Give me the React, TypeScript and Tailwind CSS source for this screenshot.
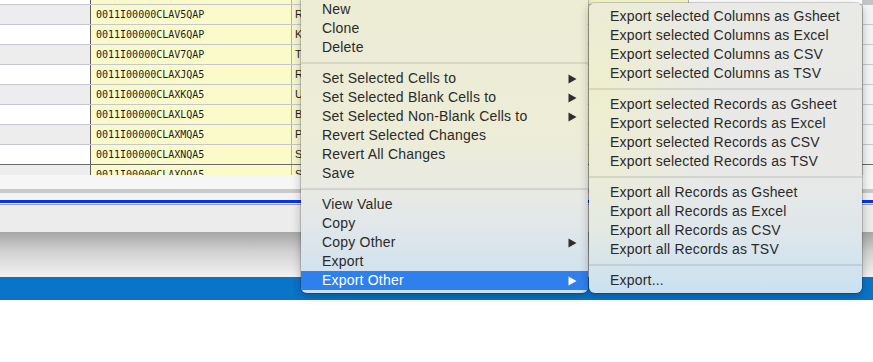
import type { ReactNode } from 'react';

type MenuEntry =
  | { kind: 'item'; label: string; submenu?: boolean; active?: boolean }
  | { kind: 'separator' };

const ROWS: { id: string; name: string }[] = [
  { id: '0011I00000CLAV5QAP', name: 'R' },
  { id: '0011I00000CLAV6QAP', name: 'K' },
  { id: '0011I00000CLAV7QAP', name: 'T' },
  { id: '0011I00000CLAXJQA5', name: 'R' },
  { id: '0011I00000CLAXKQA5', name: 'U' },
  { id: '0011I00000CLAXLQA5', name: 'B' },
  { id: '0011I00000CLAXMQA5', name: 'P' },
  { id: '0011I00000CLAXNQA5', name: 'S' },
  { id: '0011I00000CLAXOQA5', name: 'S' },
];

const MAIN_MENU: MenuEntry[] = [
  { kind: 'item', label: 'New' },
  { kind: 'item', label: 'Clone' },
  { kind: 'item', label: 'Delete' },
  { kind: 'separator' },
  { kind: 'item', label: 'Set Selected Cells to', submenu: true },
  { kind: 'item', label: 'Set Selected Blank Cells to', submenu: true },
  { kind: 'item', label: 'Set Selected Non-Blank Cells to', submenu: true },
  { kind: 'item', label: 'Revert Selected Changes' },
  { kind: 'item', label: 'Revert All Changes' },
  { kind: 'item', label: 'Save' },
  { kind: 'separator' },
  { kind: 'item', label: 'View Value' },
  { kind: 'item', label: 'Copy' },
  { kind: 'item', label: 'Copy Other', submenu: true },
  { kind: 'item', label: 'Export' },
  { kind: 'item', label: 'Export Other', submenu: true, active: true },
];

const EXPORT_MENU: MenuEntry[] = [
  { kind: 'item', label: 'Export selected Columns as Gsheet' },
  { kind: 'item', label: 'Export selected Columns as Excel' },
  { kind: 'item', label: 'Export selected Columns as CSV' },
  { kind: 'item', label: 'Export selected Columns as TSV' },
  { kind: 'separator' },
  { kind: 'item', label: 'Export selected Records as Gsheet' },
  { kind: 'item', label: 'Export selected Records as Excel' },
  { kind: 'item', label: 'Export selected Records as CSV' },
  { kind: 'item', label: 'Export selected Records as TSV' },
  { kind: 'separator' },
  { kind: 'item', label: 'Export all Records as Gsheet' },
  { kind: 'item', label: 'Export all Records as Excel' },
  { kind: 'item', label: 'Export all Records as CSV' },
  { kind: 'item', label: 'Export all Records as TSV' },
  { kind: 'separator' },
  { kind: 'item', label: 'Export...' },
];

function SubmenuArrow({ active }: { active?: boolean }) {
  return (
    <svg width="9" height="10" viewBox="0 0 9 10" className="shrink-0">
      <polygon points="0.5,0.5 8.5,5 0.5,9.5" fill={active ? '#ffffff' : '#2e2e2e'} />
    </svg>
  );
}

function MenuRows({ entries }: { entries: MenuEntry[] }) {
  return (
    <>
      {entries.map((entry, index) => {
        if (entry.kind === 'separator') {
          return (
            <div key={`sep-${index}`} className="flex h-[12px] items-center">
              <div className="h-[2px] w-full bg-black/[0.09]" />
            </div>
          );
        }
        return (
          <div
            key={entry.label}
            className={`flex h-[19px] items-center justify-between pl-[21px] pr-[11px] ${
              entry.active ? 'bg-[#2f7fed] text-white' : 'text-[#2a2a2a]'
            }`}
          >
            <span className="whitespace-nowrap">{entry.label}</span>
            {entry.submenu && <SubmenuArrow active={entry.active} />}
          </div>
        );
      })}
    </>
  );
}

function MenuPanel({ className, children }: { className: string; children: ReactNode }) {
  return (
    <div
      className={`absolute overflow-hidden rounded-[6px] text-[14px] leading-[19px] tracking-[0.2px] shadow-[0_3px_10px_rgba(0,0,0,0.28)] ring-1 ring-black/15 ${className}`}
    >
      {children}
    </div>
  );
}

function TableRow({ index, row }: { index: number; row: { id: string; name: string } }) {
  const striped = index % 2 === 0;
  const isLastSelected = index === 7;
  return (
    <div
      className={`flex h-[20px] shrink-0 border-b ${
        isLastSelected ? 'border-[#6b6b6b]' : 'border-[#c6c6ce]'
      }`}
    >
      <div className={`w-[91px] shrink-0 border-r border-[#5e5e5e] ${striped ? 'bg-[#ededed]' : 'bg-white'}`} />
      <div className="flex w-[201px] shrink-0 items-center border-r border-[#b4b4b4] bg-[#fbfbc9] pl-[5px] font-['DejaVu_Sans_Mono',monospace] text-[10px] text-[#1e1e1e]">
        {row.id}
      </div>
      <div className="flex w-[397px] shrink-0 items-center border-r border-[#b4b4b4] bg-[#f8f8cf] pl-[3px] text-[11px] text-[#1e1e1e]">
        {row.name}
      </div>
      <div className={`flex-1 ${striped ? 'bg-[#ededed]' : 'bg-white'}`} />
      <div className="w-[11px] shrink-0 border-l border-[#c8c8c8] bg-[#f4f4f4]" />
    </div>
  );
}

export default function App() {
  return (
    <div className="relative h-[362px] w-[873px] overflow-hidden bg-white font-['Liberation_Sans',Arial,sans-serif]">
      <div className="flex flex-col">
        <div className="flex h-[175px] flex-col overflow-hidden">
          <div className="flex h-[5px] shrink-0 border-b border-[#c6c6ce]">
            <div className="w-[91px] shrink-0 border-r border-[#5e5e5e] bg-white" />
            <div className="w-[201px] shrink-0 border-r border-[#b4b4b4] bg-[#fbfbc9]" />
            <div className="w-[397px] shrink-0 border-r border-[#b4b4b4] bg-[#f8f8cf]" />
            <div className="flex-1 bg-white" />
            <div className="w-[11px] shrink-0 border-l border-[#c8c8c8] bg-[#c4c4c4]" />
          </div>
          {ROWS.map((row, index) => (
            <TableRow key={row.id} index={index} row={row} />
          ))}
        </div>
        <div className="h-[14px] bg-[#f6f6f6]" />
        <div className="h-[4px] bg-[#c9c9c9]" />
        <div className="h-[7px] bg-[#f3f3f3]" />
        <div className="h-[3px] bg-[#0533f2]" />
        <div className="h-[1px] bg-[#f3f3f3]" />
        <div className="h-[1px] bg-[#9c9c9c]" />
        <div className="h-[27px] bg-[#ececec]" />
        <div className="h-[45px] bg-[linear-gradient(to_bottom,#a6a6a6,#d2d2d2_45%,#f2f2f2)]" />
        <div className="h-[23px] bg-[#0a74c8]" />
      </div>

      <MenuPanel className="left-[301px] top-[-6px] w-[287px] pb-[3px] pt-[6px] bg-[linear-gradient(to_bottom,#ededd5,#ececd8_50%,#e9eae2_64%,#e1e7ea_78%,#d4e3ed_90%,#cbe1f0)]">
        <MenuRows entries={MAIN_MENU} />
      </MenuPanel>

      <MenuPanel className="left-[589px] top-[3px] w-[273px] pb-[3px] pt-[4px] bg-[radial-gradient(ellipse_45%_70%_at_0%_30%,rgba(240,240,196,0.75),transparent),linear-gradient(to_bottom,#e9e9e6,#e8e9e7_58%,#dfe7eb_78%,#d3e3ee_90%,#cbe1f0)]">
        <MenuRows entries={EXPORT_MENU} />
      </MenuPanel>
    </div>
  );
}
